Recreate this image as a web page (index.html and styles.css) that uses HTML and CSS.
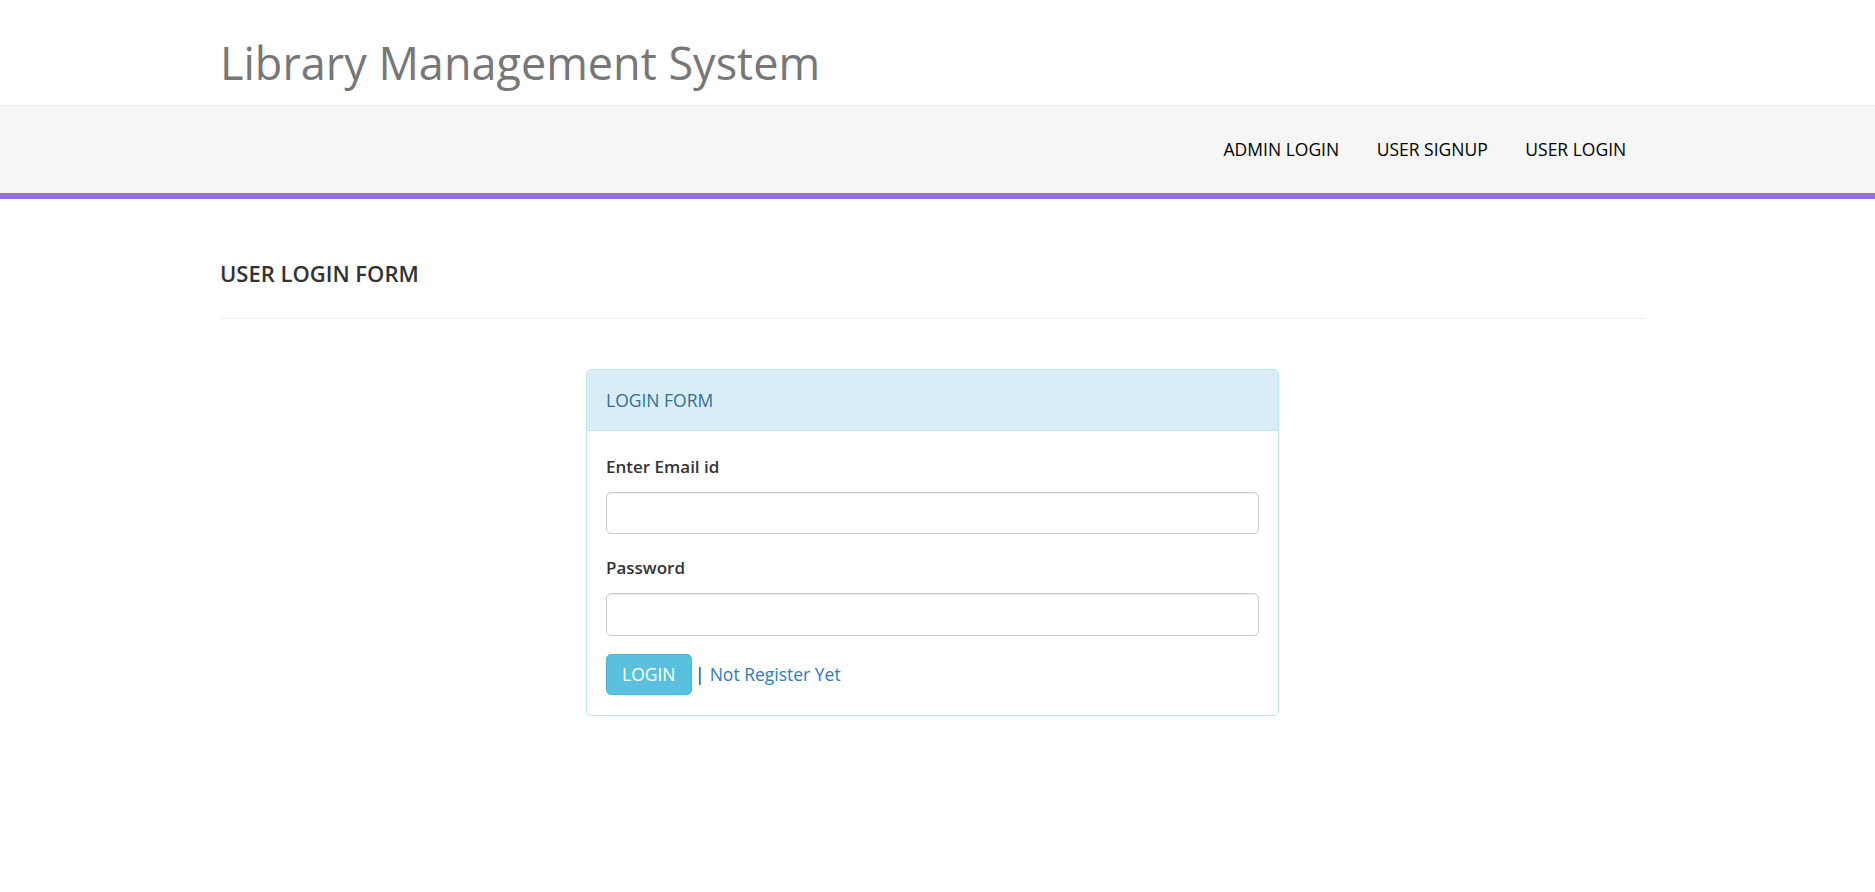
FILE: index.html
```html
<!DOCTYPE html>
<html lang="en">
<head>
<meta charset="utf-8">
<title>Library Management System</title>
<link rel="stylesheet" href="styles.css">
</head>
<body>
<header class="site-header">
  <div class="container">
    <h1 class="site-title">Library Management System</h1>
  </div>
</header>
<nav class="navbar">
  <div class="container navbar-inner">
    <ul class="nav-links">
      <li><a href="#">ADMIN LOGIN</a></li>
      <li><a href="#">USER SIGNUP</a></li>
      <li><a href="#">USER LOGIN</a></li>
    </ul>
  </div>
</nav>
<main class="container content">
  <div class="page-header">
    <h4 class="page-title">USER LOGIN FORM</h4>
  </div>
  <div class="panel">
    <div class="panel-heading">LOGIN FORM</div>
    <div class="panel-body">
      <form>
        <div class="form-group">
          <label class="form-label" for="email">Enter Email id</label>
          <input class="form-control" type="text" id="email">
        </div>
        <div class="form-group last">
          <label class="form-label" for="password">Password</label>
          <input class="form-control" type="password" id="password">
        </div>
        <div class="actions">
          <button class="btn-login" type="button">LOGIN</button>
          <span class="sep">|</span>
          <a class="register-link" href="#">Not Register Yet</a>
        </div>
      </form>
    </div>
  </div>
</main>
</body>
</html>
```
FILE: styles.css
```css
* {
  box-sizing: border-box;
}

html, body {
  margin: 0;
  padding: 0;
  background: #fff;
}

body {
  font-family: "Open Sans", "Liberation Sans", sans-serif;
  font-size: 17.5px;
  line-height: 25px;
  color: #333;
}

.container {
  width: 1435px;
  padding-right: 10px;
  margin: 0 auto;
}

.site-header {
  padding: 38px 0 17px;
}

.site-title {
  margin: 0;
  font-size: 45px;
  line-height: 50px;
  font-weight: 400;
  color: #777;
}

.navbar {
  background: #f6f6f6;
  border-top: 1px solid #e7e7e7;
  border-bottom: 6px solid #9370db;
}

.navbar-inner {
  display: flex;
  justify-content: flex-end;
}

.nav-links {
  list-style: none;
  margin: 0;
  padding: 0;
  display: flex;
}

.nav-links a {
  display: block;
  padding: 31px 18.75px;
  line-height: 25px;
  font-size: 17.5px;
  color: #000;
  text-decoration: none;
}

.content {
  padding-top: 62px;
}

.page-header {
  padding-bottom: 32px;
  border-bottom: 1px solid #eee;
  margin-bottom: 50px;
}

.page-title {
  margin: 0;
  font-size: 22px;
  line-height: 25px;
  font-weight: 600;
  color: #333;
}

.panel {
  width: 693px;
  margin: 0 auto;
  border: 1px solid #bce8f1;
  border-radius: 5px;
  background: #fff;
  overflow: hidden;
}

.panel-heading {
  background: #d9edf7;
  color: #31708f;
  border-bottom: 1px solid #bce8f1;
  padding: 17.5px 19px;
  line-height: 25px;
  font-size: 17.5px;
}

.panel-body {
  padding: 22.5px 19px 20px;
}

.form-group {
  margin-bottom: 21px;
}

.form-group.last {
  margin-bottom: 18.5px;
}

.form-label {
  display: block;
  margin-bottom: 13px;
  font-weight: 600;
  font-size: 17px;
  color: #333;
}

.form-control {
  display: block;
  width: 100%;
  height: 42.5px;
  padding: 7.5px 15px;
  font-family: inherit;
  font-size: 17.5px;
  color: #555;
  background: #fff;
  border: 1px solid #ccc;
  border-radius: 5px;
  box-shadow: inset 0 1px 1px rgba(0, 0, 0, 0.075);
}

.actions {
  display: flex;
  align-items: center;
}

.btn-login {
  height: 41px;
  padding: 0 15px;
  font-family: inherit;
  font-size: 17.5px;
  line-height: 25px;
  color: #fff;
  background: #5bc0de;
  border: 1px solid #46b8da;
  border-radius: 5px;
}

.sep {
  margin-left: 3.5px;
  color: #222;
}

.register-link {
  margin-left: 5px;
  color: #337ab7;
  text-decoration: none;
}
```
